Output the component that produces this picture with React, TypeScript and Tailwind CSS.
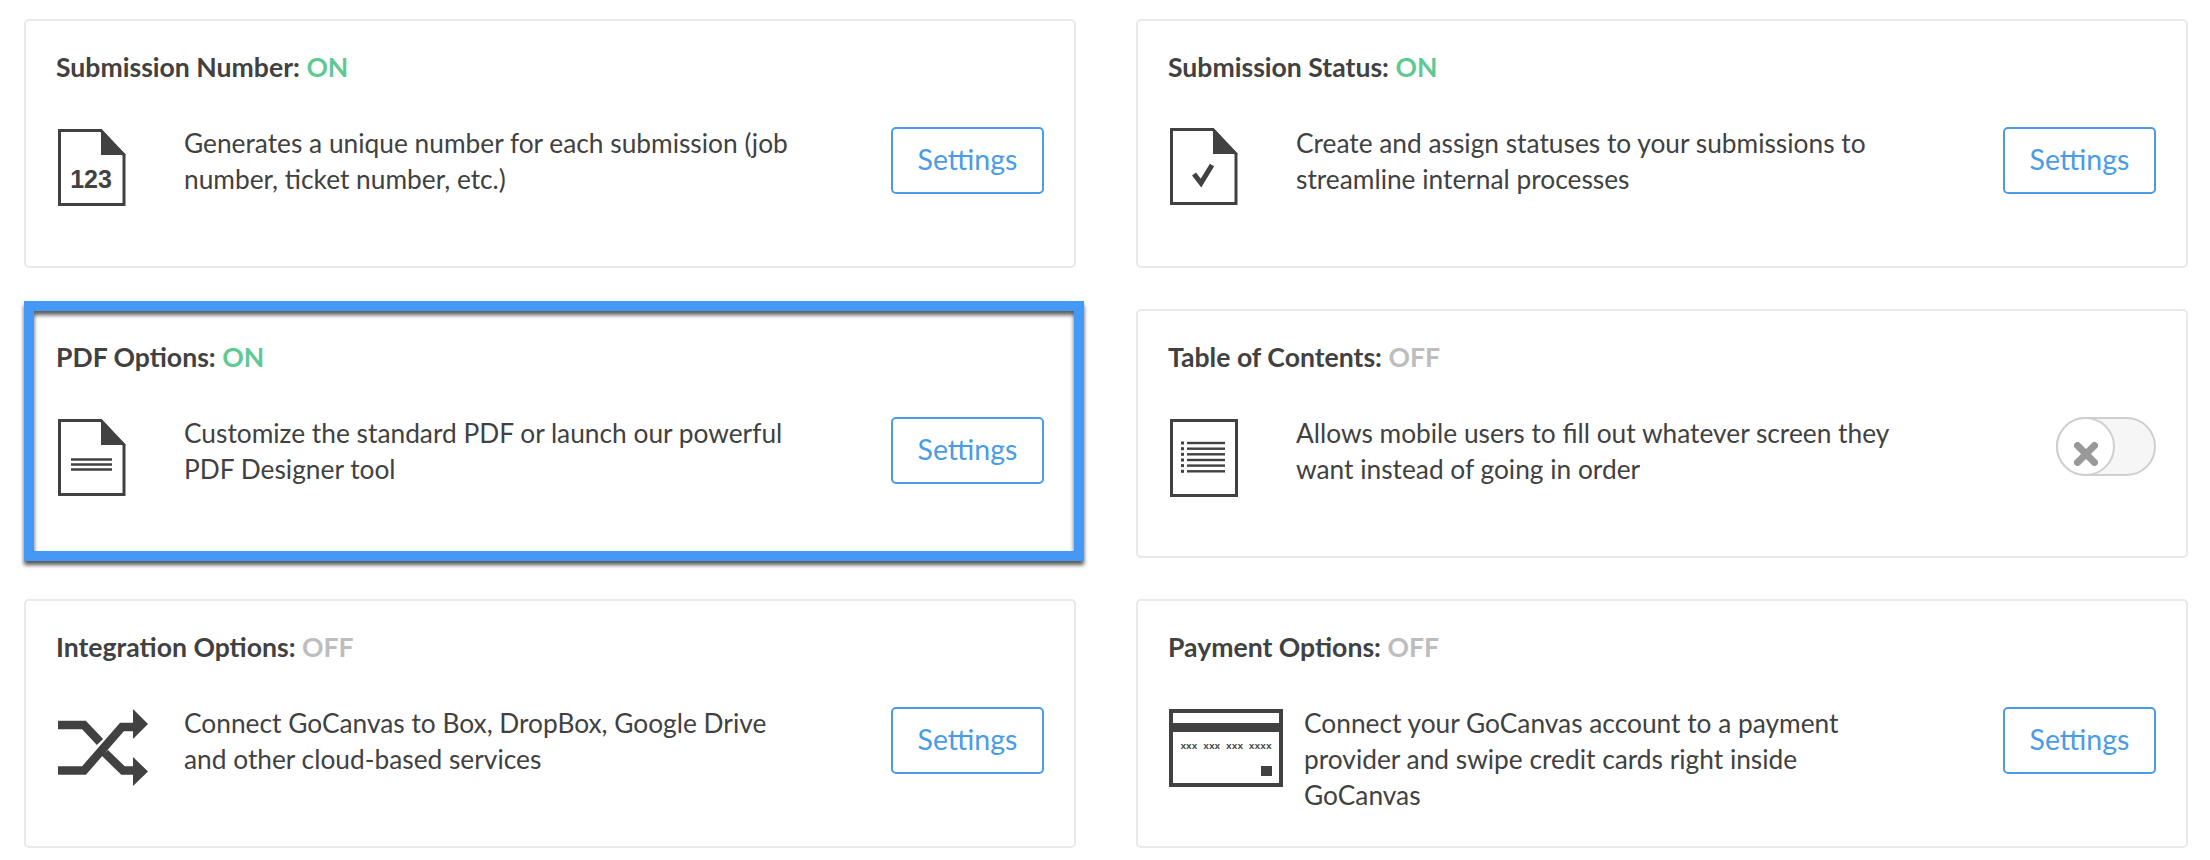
import React from "react";

const dark = "#414141";

function DocShell({ children }: { children?: React.ReactNode }) {
  return (
    <svg width="68" height="78" viewBox="0 0 68 78" className="block">
      <path d="M1.5 1.5H43L66 26V75.5H1.5Z" fill="#fff" stroke={dark} strokeWidth="3" />
      <path d="M43 0L68 26H43Z" fill={dark} />
      {children}
    </svg>
  );
}

const icons: Record<string, React.ReactNode> = {
  number: (
    <DocShell>
      <text x="33" y="59" textAnchor="middle" fontFamily="'Liberation Sans', sans-serif" fontWeight="700" fontSize="25" fill={dark}>123</text>
    </DocShell>
  ),
  status: (
    <DocShell>
      <path d="M24 46L31 55L42 37" fill="none" stroke={dark} strokeWidth="5" />
    </DocShell>
  ),
  pdf: (
    <DocShell>
      <path d="M13 40.5H54M13 45.5H54M13 50.5H54" stroke={dark} strokeWidth="2.5" />
    </DocShell>
  ),
  toc: (
    <svg width="68" height="78" viewBox="0 0 68 78" className="block">
      <rect x="1.5" y="1.5" width="65" height="75" fill="#fff" stroke={dark} strokeWidth="3" />
      {[24, 29.7, 35.3, 41, 46.6, 52.3].map((y) => (
        <g key={y}>
          <rect x="11" y={y - 1.5} width="3" height="3" fill={dark} />
          <rect x="17" y={y - 1.2} width="38" height="2.4" fill={dark} />
        </g>
      ))}
    </svg>
  ),
  shuffle: (
    <svg width="90" height="78" viewBox="0 0 90 78" className="block">
      <path d="M0 16H26L42 33M0 61.5H26L64 18H76M47 44L65 61.5H76" fill="none" stroke={dark} strokeWidth="8.5" />
      <path d="M75 0L90 15L75 30Z" fill={dark} />
      <path d="M75 48L90 62.5L75 77Z" fill={dark} />
    </svg>
  ),
  card: (
    <svg width="114" height="78" viewBox="0 0 114 78" className="block">
      <rect x="2" y="2" width="110" height="74" fill="#fff" stroke={dark} strokeWidth="4" />
      <rect x="0" y="14" width="114" height="9" fill={dark} />
      <text x="57" y="40" textAnchor="middle" fontFamily="'Liberation Mono', monospace" fontWeight="700" fontSize="9.5" fill={dark}>xxx xxx xxx xxxx</text>
      <rect x="92" y="57" width="11" height="10" fill={dark} />
    </svg>
  ),
};

function SettingsButton() {
  return (
    <button className="w-[153px] h-[67px] shrink-0 pb-[3px] rounded-[5px] border-2 border-[#4a9ce6] bg-white text-[#4a9ce6] text-[28.5px] leading-none">
      Settings
    </button>
  );
}

function Toggle() {
  return (
    <div className="relative w-[100px] h-[59px] shrink-0 rounded-full border-2 border-[#cfcfcf] bg-[#f6f6f6]">
      <div className="absolute left-[-2px] top-[-2px] w-[59px] h-[59px] rounded-full border-2 border-[#cfcfcf] bg-white flex items-center justify-center">
        <svg width="24" height="24" viewBox="0 0 24 24" className="mt-[15px]">
          <path d="M3.5 3.5L20.5 20.5M20.5 3.5L3.5 20.5" stroke="#999" strokeWidth="7" strokeLinecap="round" />
        </svg>
      </div>
    </div>
  );
}

type Item = {
  title: string;
  on: boolean;
  icon: string;
  text: string[];
  textClass: string;
  iconClass: string;
  toggle?: boolean;
  highlight?: boolean;
};

const items: Item[] = [
  { title: "Submission Number:", on: true, icon: "number", text: ["Generates a unique number for each submission (job", "number, ticket number, etc.)"], textClass: "ml-[58px]", iconClass: "mt-[2px] ml-[2px]" },
  { title: "Submission Status:", on: true, icon: "status", text: ["Create and assign statuses to your submissions to", "streamline internal processes"], textClass: "ml-[58px]", iconClass: "mt-[1px] ml-[2px]" },
  { title: "PDF Options:", on: true, icon: "pdf", text: ["Customize the standard PDF or launch our powerful", "PDF Designer tool"], textClass: "ml-[58px]", iconClass: "mt-[2px] ml-[2px]", highlight: true },
  { title: "Table of Contents:", on: false, icon: "toc", text: ["Allows mobile users to fill out whatever screen they", "want instead of going in order"], textClass: "ml-[58px]", iconClass: "mt-[2px] ml-[2px]", toggle: true },
  { title: "Integration Options:", on: false, icon: "shuffle", text: ["Connect GoCanvas to Box, DropBox, Google Drive", "and other cloud-based services"], textClass: "ml-[36px]", iconClass: "mt-[2px] ml-[2px]" },
  { title: "Payment Options:", on: false, icon: "card", text: ["Connect your GoCanvas account to a payment", "provider and swipe credit cards right inside", "GoCanvas"], textClass: "ml-[21px]", iconClass: "mt-[2px] ml-[1px]" },
];

function Card({ item }: { item: Item }) {
  return (
    <div className="relative">
      <div className="h-[249px] rounded-[5px] border-2 border-[#e9e9e9] bg-white pl-[30px] pr-[30px] pt-[33px]">
        <h3 className="text-[26.6px] leading-[26px] font-bold text-[#414141]">
          {item.title}{" "}
          <span className={item.on ? "text-[#5fc994]" : "text-[#bdbdbd]"}>{item.on ? "ON" : "OFF"}</span>
        </h3>
        <div className="flex items-start mt-[47px]">
          <div className={item.iconClass}>{icons[item.icon]}</div>
          <p className={`flex-1 min-w-0 mt-[-2px] text-[26.3px] leading-[36px] text-[#414141] ${item.textClass}`}>
            {item.text.map((line) => (
              <span key={line} className="block whitespace-nowrap">{line}</span>
            ))}
          </p>
          {item.toggle ? <Toggle /> : <SettingsButton />}
        </div>
      </div>
      {item.highlight && (
        <div className="absolute left-0 right-[-8px] top-[-8px] bottom-[-3px] border-[10px] border-[#4499f7] pointer-events-none shadow-[0_4px_4px_rgba(0,0,0,0.65),inset_0_4px_4px_rgba(0,0,0,0.65)]" />
      )}
    </div>
  );
}

export default function App() {
  return (
    <div className="w-[2210px] h-[860px] bg-white overflow-hidden pt-[19px] pl-[24px] font-['Lato','Noto_Sans',sans-serif]">
      <div className="grid grid-cols-[1052px_1052px] gap-x-[60px] gap-y-[41px]">
        {items.map((item) => (
          <Card key={item.title} item={item} />
        ))}
      </div>
    </div>
  );
}
